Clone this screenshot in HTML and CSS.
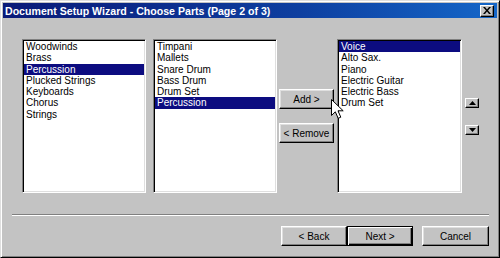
FILE: index.html
```html
<!DOCTYPE html>
<html lang="en">
<head>
    <meta charset="UTF-8">
    <title>Document Setup Wizard</title>
    <link rel="stylesheet" href="styles.css">
</head>
<body>

    <div class="window">
        <div class="titlebar">
            <span class="title">Document Setup Wizard - Choose Parts (Page 2 of 3)</span>
            <span class="close">
                <svg width="8" height="7" viewBox="0 0 8 7">
                    <path d="M0 0h2l2 2.5 2-2.5h2l-3 3.5 3 3.5h-2l-2-2.5-2 2.5h-2l3-3.5z" fill="#000"/>
                </svg>
            </span>
        </div>

        <div class="panel">
            <ul class="list list-groups">
                <li>Woodwinds</li>
                <li>Brass</li>
                <li class="selected">Percussion</li>
                <li>Plucked Strings</li>
                <li>Keyboards</li>
                <li>Chorus</li>
                <li>Strings</li>
            </ul>

            <ul class="list list-parts">
                <li>Timpani</li>
                <li>Mallets</li>
                <li>Snare Drum</li>
                <li>Bass Drum</li>
                <li>Drum Set</li>
                <li class="selected">Percussion</li>
            </ul>

            <div class="move-buttons">
                <button class="btn btn-add">Add &gt;</button>
                <button class="btn btn-remove">&lt; Remove</button>
                <svg class="cursor" width="13" height="20" viewBox="0 0 13 20">
                    <path d="M0.5 0.5V16.5L4.3 12.8L7.2 19.3L9.8 18.2L7 11.8H12.2Z" fill="#fff" stroke="#000" stroke-width="1"/>
                </svg>
            </div>

            <ul class="list list-score">
                <li class="selected">Voice</li>
                <li>Alto Sax.</li>
                <li>Piano</li>
                <li>Electric Guitar</li>
                <li>Electric Bass</li>
                <li>Drum Set</li>
            </ul>

            <div class="order-buttons">
                <button class="btn-small">
                    <svg width="7" height="4" viewBox="0 0 7 4"><path d="M3.5 0L7 4H0Z" fill="#000"/></svg>
                </button>
                <button class="btn-small btn-down">
                    <svg width="7" height="4" viewBox="0 0 7 4"><path d="M0 0H7L3.5 4Z" fill="#000"/></svg>
                </button>
            </div>
        </div>

        <div class="separator"></div>

        <div class="footer">
            <button class="btn btn-nav">&lt; Back</button>
            <button class="btn btn-nav btn-default">Next &gt;</button>
            <button class="btn btn-nav btn-cancel">Cancel</button>
        </div>
    </div>

</body>
</html>
```

FILE: styles.css
```css
body {
    margin: 0;
    font-family: "Liberation Sans", Arial, sans-serif;
    font-size: 10px;
    background-color: #c3c3c3;
}
.window {
    width: 500px;
    height: 258px;
    box-sizing: border-box;
    padding: 2px;
    background-color: #c3c3c3;
    border: 1px solid;
    border-color: #dfdfdf #000 #000 #dfdfdf;
    box-shadow: inset 1px 1px #fff, inset -1px -1px #808080;
}
.titlebar {
    height: 15px;
    display: flex;
    align-items: center;
    justify-content: space-between;
    padding: 0 3px 0 2px;
    background: linear-gradient(to right, #0a1a78, #0e3fa0 60%, #1466c8);
}
.title {
    color: white;
    font-weight: bold;
    font-size: 10.6px;
}
.close {
    width: 14px;
    height: 12px;
    box-sizing: border-box;
    display: flex;
    align-items: center;
    justify-content: center;
    background-color: #c3c3c3;
    border: 1px solid;
    border-color: #fff #000 #000 #fff;
    box-shadow: inset -1px -1px #808080;
}
.panel {
    display: flex;
    align-items: flex-start;
    padding: 21px 0 0 19px;
    height: 154px;
}
.list {
    list-style: none;
    margin: 0;
    padding: 1px;
    height: 154px;
    box-sizing: border-box;
    background-color: white;
    border: 1px solid;
    border-color: #808080 #fff #fff #808080;
    box-shadow: inset 1px 1px #000, inset -1px -1px #dfdfdf;
}
.list li {
    height: 11.3px;
    line-height: 11.3px;
    padding-left: 2px;
    white-space: nowrap;
}
.list li.selected {
    background-color: #0c0c80;
    color: white;
}
.list-groups {
    width: 124px;
    margin-right: 7px;
}
.list-parts {
    width: 124px;
    margin-right: 2px;
}
.list-score {
    width: 125px;
    margin-right: 3px;
}
.move-buttons {
    position: relative;
    display: flex;
    flex-direction: column;
    gap: 14px;
    width: 55px;
    margin-right: 3px;
    padding-top: 50px;
}
.btn {
    height: 20px;
    padding: 0;
    font-family: "Liberation Sans", Arial, sans-serif;
    font-size: 10px;
    color: black;
    background-color: #c3c3c3;
    border: 1px solid;
    border-color: #fff #000 #000 #fff;
    box-shadow: inset -1px -1px #808080, inset 1px 1px #dfdfdf;
}
.cursor {
    position: absolute;
    left: 52px;
    top: 60px;
}
.order-buttons {
    display: flex;
    flex-direction: column;
    gap: 17px;
    padding-top: 59px;
}
.btn-small {
    width: 14px;
    height: 10px;
    padding: 0;
    display: flex;
    align-items: center;
    justify-content: center;
    background-color: #c3c3c3;
    border: 1px solid;
    border-color: #fff #000 #000 #fff;
    box-shadow: inset -1px -1px #808080;
}
.separator {
    margin: 21px 8px 0 9px;
    height: 1px;
    background-color: #808080;
    border-bottom: 1px solid #fff;
}
.footer {
    display: flex;
    justify-content: flex-end;
    padding: 10px 8px 0 0;
}
.btn-nav {
    width: 66px;
}
.btn-default {
    border-color: #000;
    box-shadow: inset 1px 1px #fff, inset -1px -1px #000, inset -2px -2px #808080;
}
.btn-cancel {
    width: 67px;
    margin-left: 9px;
}
```
